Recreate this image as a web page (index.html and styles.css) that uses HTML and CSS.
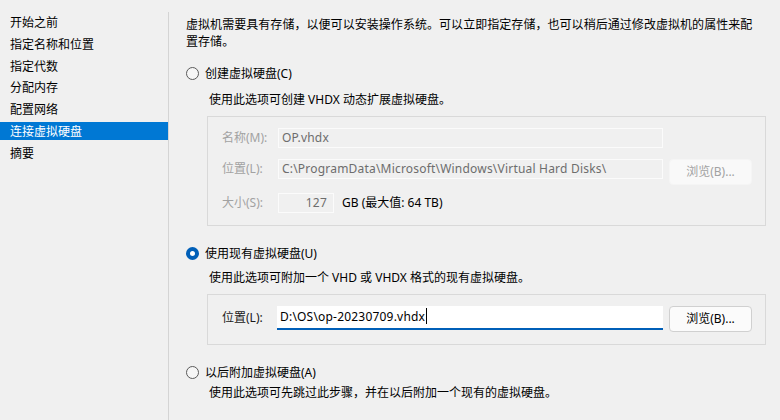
FILE: index.html
```html
<!DOCTYPE html>
<html lang="zh-CN">
<head>
<meta charset="utf-8">
<title>连接虚拟硬盘</title>
<link rel="stylesheet" href="styles.css">
</head>
<body>
<div class="wizard">
  <nav class="steps">
    <div class="step">开始之前</div>
    <div class="step">指定名称和位置</div>
    <div class="step">指定代数</div>
    <div class="step">分配内存</div>
    <div class="step">配置网络</div>
    <div class="step active">连接虚拟硬盘</div>
    <div class="step">摘要</div>
  </nav>
  <main class="content">
    <p class="intro">虚拟机需要具有存储，以便可以安装操作系统。可以立即指定存储，也可以稍后通过修改虚拟机的属性来配置存储。</p>

    <label class="radio r1"><span class="dot"></span>创建虚拟硬盘(C)</label>
    <p class="desc d1">使用此选项可创建 VHDX 动态扩展虚拟硬盘。</p>
    <div class="group g1">
      <div class="row row-a">
        <span class="lbl dis">名称(M):</span>
        <span class="field dis-field">OP.vhdx</span>
      </div>
      <div class="row row-b">
        <span class="lbl dis">位置(L):</span>
        <span class="field dis-field">C:\ProgramData\Microsoft\Windows\Virtual Hard Disks\</span>
        <span class="btn btn-dis">浏览(B)...</span>
      </div>
      <div class="row row-c">
        <span class="lbl dis">大小(S):</span>
        <span class="field dis-field size">127</span>
        <span class="unit">GB (最大值: 64 TB)</span>
      </div>
    </div>

    <label class="radio r2"><span class="dot on"></span>使用现有虚拟硬盘(U)</label>
    <p class="desc d2">使用此选项可附加一个 VHD 或 VHDX 格式的现有虚拟硬盘。</p>
    <div class="group g2">
      <div class="row row-d">
        <span class="lbl">位置(L):</span>
        <span class="field live">D:\OS\op-20230709.vhdx<span class="caret"></span></span>
        <span class="btn">浏览(B)...</span>
      </div>
    </div>

    <label class="radio r3"><span class="dot"></span>以后附加虚拟硬盘(A)</label>
    <p class="desc d3">使用此选项可先跳过此步骤，并在以后附加一个现有的虚拟硬盘。</p>
  </main>
</div>
</body>
</html>
```

FILE: styles.css
```css
html, body {
  margin: 0;
  padding: 0;
  background: #f0f0f0;
}
body {
  width: 780px;
  height: 420px;
  overflow: hidden;
  font-family: "Noto Sans", "Noto Sans CJK SC", sans-serif;
  font-size: 12px;
  color: #1a1a1a;
}
.wizard {
  display: flex;
  height: 420px;
}
.steps {
  width: 168px;
  margin-top: 12px;
  padding-top: 1px;
  border-right: 1px solid #d4d4d4;
  display: flex;
  flex-direction: column;
  gap: 3.8px;
}
.step {
  height: 18px;
  line-height: 18px;
  padding-left: 10px;
  color: #000;
  font-family: "Noto Sans CJK SC", sans-serif;
}
.step.active {
  background: #0078d4;
  color: #fff;
}
.content {
  flex: 1;
  padding-left: 17px;
  display: flex;
  flex-direction: column;
  align-items: flex-start;
}
p { margin: 0; }
.intro {
  margin-top: 16px;
  line-height: 17px;
  width: 572px;
  letter-spacing: 0.05px;
  color: #000;
}
.radio {
  display: flex;
  align-items: center;
  height: 17px;
  line-height: 17px;
  color: #000;
}
.dot {
  width: 11px;
  height: 11px;
  border: 1px solid #5a5a5a;
  border-radius: 50%;
  margin-right: 6px;
  background: #f6f6f6;
  box-sizing: content-box;
  flex: none;
}
.dot.on {
  width: 5px;
  height: 5px;
  border: 4px solid #005fb8;
  background: #fff;
}
.r1 { margin-top: 15px; }
.desc {
  margin-left: 23px;
  line-height: 17px;
  color: #000;
}
.d1 { margin-top: 9px; }
.group {
  margin-left: 21px;
  border: 1px solid #d9d9d9;
  padding-left: 14px;
  box-sizing: content-box;
}
.g1 {
  margin-top: 8px;
  padding-top: 11px;
  padding-bottom: 12px;
  width: 543px;
}
.row {
  display: flex;
  align-items: flex-start;
}
.lbl {
  width: 56px;
  line-height: 20px;
  flex: none;
}
.lbl.dis { color: #a2a2a2; }
.field {
  width: 385px;
  height: 20px;
  line-height: 18px;
  box-sizing: border-box;
  padding-left: 3px;
  flex: none;
  white-space: nowrap;
  overflow: hidden;
  letter-spacing: 0.2px;
}
.dis-field {
  border: 1px solid #fbfbfb;
  color: #6d6d6d;
}
.row-a { margin-bottom: 11px; }
.row-b { margin-bottom: 8px; }
.size {
  width: 56px;
  text-align: right;
  padding-right: 6px;
  color: #6d6d6d;
}
.unit {
  margin-left: 8px;
  line-height: 20px;
  color: #000;
}
.btn {
  margin-left: 6px;
  width: 83px;
  height: 26px;
  line-height: 24px;
  box-sizing: border-box;
  border: 1px solid #d0d0d0;
  border-radius: 4px;
  background: #fbfbfb;
  text-align: center;
  color: #000;
  flex: none;
}
.btn-dis {
  border-color: #f5f5f5;
  background: #f9f9f9;
  color: #a2a2a2;
}
.r2 { margin-top: 19px; }
.d2 { margin-top: 7px; }
.g2 {
  margin-top: 8px;
  padding-top: 11px;
  padding-bottom: 12px;
  width: 543px;
}
.row-d .lbl { line-height: 24px; }
.live {
  height: 24px;
  line-height: 22px;
  background: #fff;
  border-bottom: 2px solid #005fb8;
  padding-left: 3px;
  width: 386px;
  margin-left: -1px;
  color: #000;
}
.caret {
  display: inline-block;
  width: 1px;
  height: 16px;
  background: #000;
  vertical-align: -3px;
  margin-left: 1px;
}
.r3 { margin-top: 19px; }
.d3 { margin-top: 3px; }
```
